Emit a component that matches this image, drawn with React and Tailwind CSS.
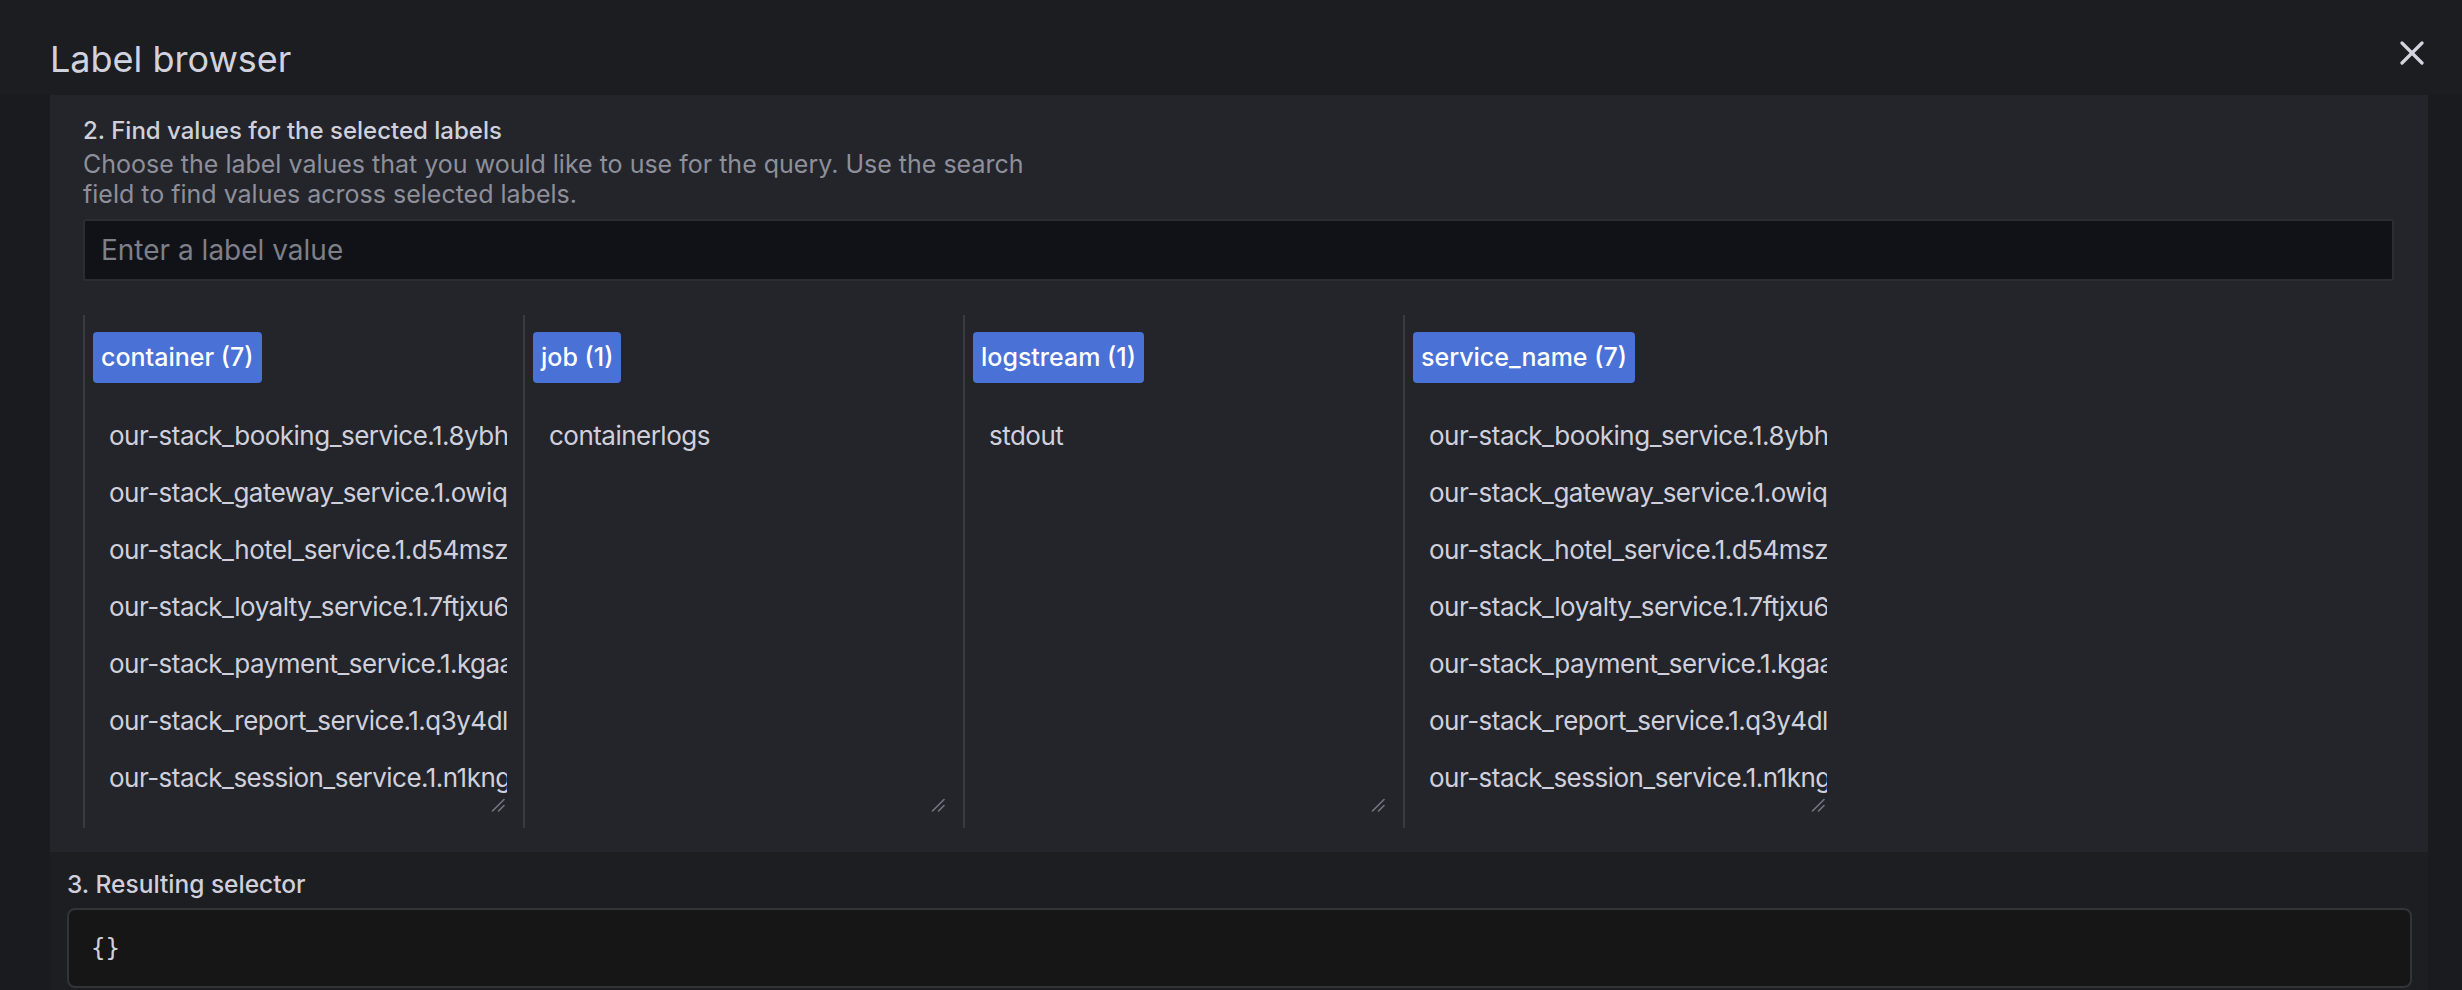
import React from "react";

const services = [
  "our-stack_booking_service.1.8ybhq2k0v4m7xw1",
  "our-stack_gateway_service.1.owiqz8t3n5r2pd6",
  "our-stack_hotel_service.1.d54mszk7wq1v0a9e",
  "our-stack_loyalty_service.1.7ftjxu6p2h9cr4l",
  "our-stack_payment_service.1.kgaax3m8n0t5yq2",
  "our-stack_report_service.1.q3y4dlz6b8w1kf0",
  "our-stack_session_service.1.n1kngf7r4c2xj9s",
];

const labels = [
  { name: "container", values: services },
  { name: "job", values: ["containerlogs"] },
  { name: "logstream", values: ["stdout"] },
  { name: "service_name", values: services },
];

function ResizeHandle() {
  return (
    <svg
      className="absolute bottom-[3px] right-[2px]"
      width="14"
      height="14"
      viewBox="0 0 14 14"
      fill="none"
      stroke="#74757e"
      strokeWidth="1.6"
      strokeLinecap="round"
    >
      <line x1="1.5" y1="13" x2="13" y2="1.5" />
      <line x1="7.5" y1="13" x2="13" y2="7.5" />
    </svg>
  );
}

function LabelColumn({ label }) {
  return (
    <div className="h-[513px] w-[440px] shrink-0 border-l-2 border-[#383a41] pl-[8px] pt-[17px]">
      <div className="flex">
        <span className="flex h-[51px] items-center rounded-[4px] bg-[#4a71d6] px-[8px] text-[25px] font-medium text-white">
          {label.name} ({label.values.length})
        </span>
      </div>
      <div className="relative mt-[16px] h-[416px] w-[414px] overflow-hidden pt-[8px]">
        {label.values.map((v) => (
          <div
            key={v}
            className="flex h-[57px] items-center whitespace-nowrap pl-[16px] text-[26px] tracking-[-0.02em] text-[#d0d0dc]"
          >
            {v}
          </div>
        ))}
        <ResizeHandle />
      </div>
    </div>
  );
}

export default function App() {
  return (
    <div className="h-[990px] w-[2462px] overflow-hidden bg-[#1c1d21] font-[family-name:Inter,'Noto_Sans',sans-serif] text-[#ccccdc]">
      <div className="flex items-start justify-between pl-[50px] pr-[38px] pt-[37px]">
        <h1 className="text-[36px] leading-[44px] font-normal text-[#d2d2de]">Label browser</h1>
        <svg
          className="mt-[4px]"
          width="24"
          height="24"
          viewBox="0 0 24 24"
          fill="none"
          stroke="#d4d4e0"
          strokeWidth="3.2"
          strokeLinecap="round"
        >
          <line x1="2" y1="2" x2="22" y2="22" />
          <line x1="22" y1="2" x2="2" y2="22" />
        </svg>
      </div>

      <div className="mt-[14px] flex h-[900px] bg-[#1a1b1f]">
        <div className="ml-[50px] w-[2378px] bg-[#1d1e22]">
          <section className="bg-[#23252b] pb-[24px] pl-[33px] pr-[34px] pt-[21px]">
            <div className="text-[24px] leading-[30px] font-medium text-[#d0d0dc]">
              2. Find values for the selected labels
            </div>
            <p className="mt-[3px] max-w-[960px] text-[25px] leading-[30px] text-[#8e8f9a]">
              Choose the label values that you would like to use for the query. Use the search field to find values across selected labels.
            </p>
            <div className="mt-[10px] flex h-[62px] items-center rounded-[3px] border-2 border-[#2b2d33] bg-[#111217] pl-[16px]">
              <span className="text-[28px] text-[#7d7f89]">Enter a label value</span>
            </div>
            <div className="mt-[34px] flex">
              {labels.map((l) => (
                <LabelColumn key={l.name} label={l} />
              ))}
            </div>
          </section>

          <section className="pl-[17px] pr-[16px] pt-[17px]">
            <div className="text-[24.5px] leading-[30px] font-medium text-[#d0d0dc]">3. Resulting selector</div>
            <div className="mt-[9px] flex h-[80px] items-center rounded-[8px] border-2 border-[#333438] bg-[#161616] pl-[22px]">
              <span className="font-[family-name:'DejaVu_Sans_Mono',monospace] text-[24px] text-[#d0d0dc]">{"{}"}</span>
            </div>
          </section>
        </div>
      </div>
    </div>
  );
}
